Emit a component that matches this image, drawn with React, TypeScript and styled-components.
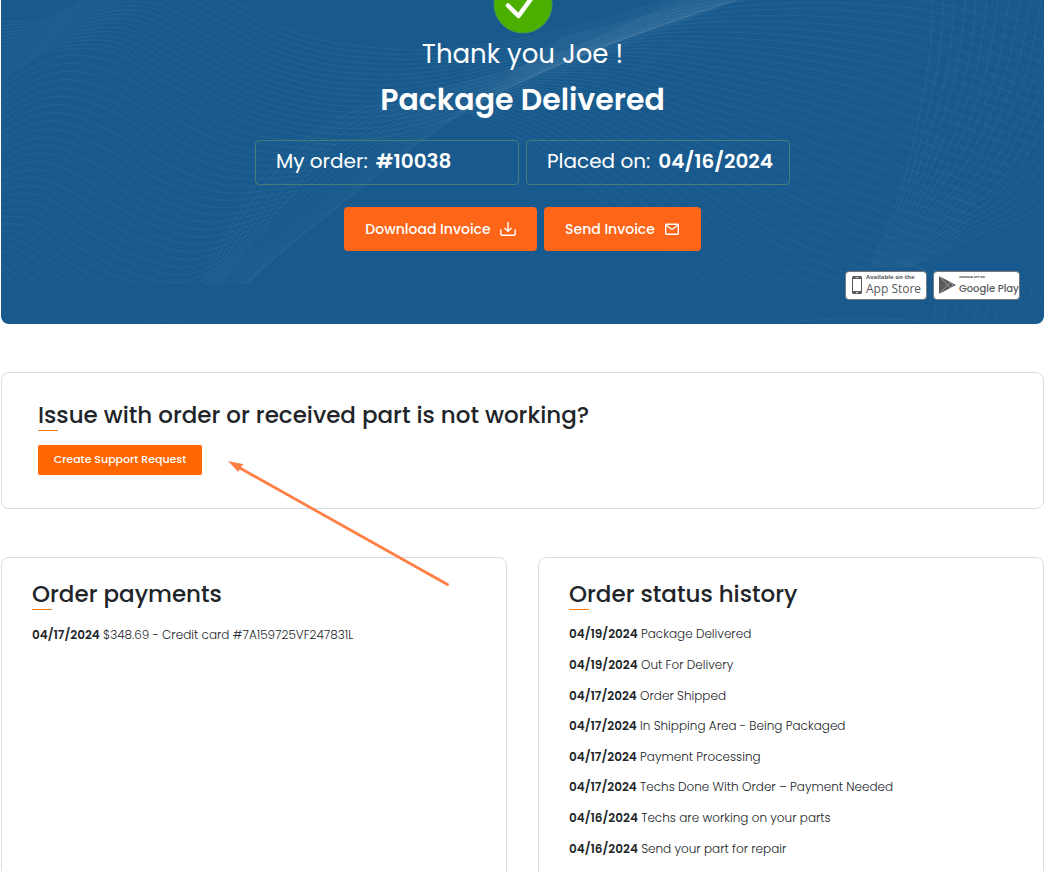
import React from "react";
import styled, { createGlobalStyle } from "styled-components";

const GlobalStyle = createGlobalStyle`
  *, *::before, *::after { box-sizing: border-box; }
  body {
    margin: 0;
    background: #fff;
    color: #212529;
    font-family: Poppins, Inter, "Liberation Sans", sans-serif;
    font-size: 12px;
  }
  h1, h2, p, ul, dl, dd { margin: 0; padding: 0; }
`;

const Page = styled.main`
  display: flex;
  flex-direction: column;
  gap: 48px;
  padding: 0 6px 48px 1px;
`;

/* ---------- hero ---------- */

const Hero = styled.header`
  position: relative;
  display: flex;
  flex-direction: column;
  align-items: center;
  padding-bottom: 24px;
  border-radius: 0 0 8px 8px;
  background: #185a8d;
  color: #fff;
  overflow: hidden;
`;

const Waves = styled.svg`
  position: absolute;
  inset: 0;
  width: 100%;
  height: 100%;
  fill: none;
  stroke: #fff;
`;

const HeroBody = styled.div`
  position: relative;
  display: flex;
  flex-direction: column;
  align-items: center;
  width: 100%;
`;

const StatusMark = styled.svg`
  display: block;
  width: 60px;
  height: 34px;
`;

const Thanks = styled.p`
  font-size: 26px;
  line-height: 40px;
`;

const Status = styled.h1`
  margin-top: 2px;
  font-size: 30px;
  font-weight: 600;
  line-height: 48px;
`;

const Facts = styled.dl`
  display: flex;
  gap: 7px;
  margin-top: 16px;
`;

const Fact = styled.div`
  display: flex;
  gap: 8px;
  width: 264px;
  height: 45px;
  padding: 0 20px;
  border: 1px solid #467d76;
  border-radius: 4px;
  font-size: 20px;
  line-height: 41px;
  white-space: nowrap;

  dd { font-weight: 600; }
`;

const Actions = styled.div`
  display: flex;
  gap: 7px;
  margin-top: 22px;
`;

const HeroButton = styled.button<{ $width: number }>`
  display: flex;
  align-items: center;
  justify-content: center;
  gap: 9px;
  width: ${(p) => p.$width}px;
  height: 44px;
  padding: 0;
  border: 0;
  border-radius: 4px;
  background: #fd6518;
  color: #fff;
  font: inherit;
  font-size: 14px;
  font-weight: 500;
  white-space: nowrap;
  cursor: pointer;
`;

const ButtonIcon = styled.svg`
  width: 16px;
  height: 16px;
  fill: none;
  stroke: currentColor;
`;

const Stores = styled.nav`
  display: flex;
  gap: 6px;
  align-self: flex-end;
  margin: 20px 24px 0 0;
`;

const StoreBadge = styled.a<{ $width: number }>`
  display: flex;
  align-items: center;
  gap: 3px;
  width: ${(p) => p.$width}px;
  height: 29px;
  padding: 0 0 2px 5px;
  border: 1px solid #77797c;
  border-radius: 4px;
  background: #fff;
  color: #58595b;
  text-decoration: none;
  white-space: nowrap;

  svg { flex: none; }
`;

const StoreText = styled.span<{ $face: string }>`
  display: flex;
  flex-direction: column;
  font-family: ${(p) => p.$face}, sans-serif;
`;

const StoreHint = styled.small<{ $size: number }>`
  font-size: ${(p) => p.$size}px;
  font-weight: 700;
  line-height: 8px;
`;

const StoreName = styled.span<{ $size: number }>`
  font-size: ${(p) => p.$size}px;
  font-weight: 500;
  line-height: 16px;
`;

/* ---------- cards ---------- */

const Card = styled.section`
  position: relative;
  border: 1px solid #d2dfe9;
  border-radius: 8px;
  padding: 21px 30px 30px;
`;

const SupportCard = styled(Card)`
  padding: 27px 36px 33px;
`;

const CardTitle = styled.h2`
  font-size: 23px;
  font-weight: 500;
  line-height: 30px;

  &::after {
    content: "";
    display: block;
    width: 20px;
    height: 1px;
    background: #fd7e14;
  }
`;

const SupportButton = styled.button`
  display: block;
  width: 164px;
  height: 30px;
  margin-top: 14px;
  padding: 0 0 2px;
  border: 0;
  border-radius: 2px;
  background: #ff6600;
  color: #fff;
  font: inherit;
  font-size: 11px;
  font-weight: 500;
  line-height: 28px;
  white-space: nowrap;
  cursor: pointer;
`;

const Arrow = styled.svg`
  position: absolute;
  z-index: 1;
  top: 86px;
  left: 225px;
  width: 224px;
  height: 128px;
  pointer-events: none;
`;

const Columns = styled.div`
  display: grid;
  grid-template-columns: 1fr 1fr;
  gap: 31px;
`;

const Entries = styled.ul<{ $height: number }>`
  display: grid;
  grid-auto-rows: 1fr;
  align-items: center;
  height: ${(p) => p.$height}px;
  margin-top: 9px;
  list-style: none;
  font-weight: 300;
  white-space: nowrap;

  strong { font-weight: 600; }
`;

/* ---------- wave drawing ---------- */

type Pt = [number, number];

const smooth = (pts: Pt[]) => {
  let d = `M${pts[0][0]} ${pts[0][1]}`;
  for (let i = 0; i < pts.length - 1; i++) {
    const a = pts[Math.max(i - 1, 0)];
    const b = pts[i];
    const c = pts[i + 1];
    const e = pts[Math.min(i + 2, pts.length - 1)];
    d += `C${(b[0] + (c[0] - a[0]) / 6).toFixed(1)} ${(b[1] + (c[1] - a[1]) / 6).toFixed(1)} ${(c[0] - (e[0] - b[0]) / 6).toFixed(1)} ${(c[1] - (e[1] - b[1]) / 6).toFixed(1)} ${c[0].toFixed(1)} ${c[1].toFixed(1)}`;
  }
  return d;
};

/* Lines blended from one curve to another; ease > 1 packs them towards the second. */
const family = (from: Pt[], to: Pt[], count: number, ease = 1) =>
  Array.from({ length: count }, (_, i) => {
    const t = 1 - Math.pow(1 - i / (count - 1), ease);
    return smooth(
      from.map((p, k) => [p[0] + (to[k][0] - p[0]) * t, p[1] + (to[k][1] - p[1]) * t] as Pt)
    );
  });

const waveLines = [
  ...family(
    [[-2, 22], [50, 17], [105, -12], [170, -25], [230, 0], [285, 29], [350, 45], [440, 49], [560, 30], [700, -12], [830, -60]],
    [[-2, 84], [30, 60], [60, 50], [110, 52], [170, 85], [250, 124], [350, 140], [440, 122], [560, 75], [700, 14], [860, -40]],
    18
  ),
  ...family(
    [[-2, 88], [40, 63], [80, 55], [130, 70], [190, 108], [250, 134], [335, 145]],
    [[-2, 270], [8, 278], [20, 290], [60, 320], [110, 340], [160, 340], [215, 288]],
    29
  ),
  ...family(
    [[197, 286], [230, 225], [270, 168], [340, 117], [430, 92], [560, 52], [700, -10], [800, -60]],
    [[243, 286], [280, 253], [350, 196], [400, 156], [470, 108], [570, 60], [700, 12], [860, -40]],
    20,
    1.6
  ),
  ...family(
    [[560, 38], [680, 8], [780, -8], [880, -10], [970, 2], [1110, 60]],
    [[460, 110], [530, 145], [610, 208], [680, 262], [750, 310], [860, 350]],
    38
  ),
  ...family(
    [[932, -5], [928, 60], [917, 120], [900, 190], [869, 268]],
    [[1140, -5], [1110, 90], [1044, 200], [970, 238], [908, 267]],
    20
  ),
];

const footLines = [
  ...family([[937, 284], [935, 305], [932, 326]], [[1042, 284], [1039, 305], [1032, 326]], 11),
  "M135 324Q165 317 195 324",
  "M780 322Q870 315 950 323",
];

/* ---------- data ---------- */

type Entry = [date: string, text: string];

const payments: Entry[] = [["04/17/2024", "$348.69 - Credit card #7A159725VF247831L"]];

const history: Entry[] = [
  ["04/19/2024", "Package Delivered"],
  ["04/19/2024", "Out For Delivery"],
  ["04/17/2024", "Order Shipped"],
  ["04/17/2024", "In Shipping Area - Being Packaged"],
  ["04/17/2024", "Payment Processing"],
  ["04/17/2024", "Techs Done With Order – Payment Needed"],
  ["04/16/2024", "Techs are working on your parts"],
  ["04/16/2024", "Send your part for repair"],
];

const EntryList = ({ entries, height }: { entries: Entry[]; height: number }) => (
  <Entries $height={height}>
    {entries.map(([date, text]) => (
      <li key={text}>
        <strong>{date}</strong> {text}
      </li>
    ))}
  </Entries>
);

export default function App() {
  return (
    <>
      <GlobalStyle />
      <Page>
        <Hero>
          <Waves viewBox="0 0 1043 324" preserveAspectRatio="xMidYMin slice" aria-hidden="true">
            <defs>
              <clipPath id="wave-tile">
                <rect width="1043" height="284" />
              </clipPath>
            </defs>
            <g clipPath="url(#wave-tile)" strokeOpacity="0.05">
              {waveLines.map((d, i) => (
                <path key={i} d={d} />
              ))}
            </g>
            <g strokeOpacity="0.04">
              {footLines.map((d, i) => (
                <path key={i} d={d} />
              ))}
            </g>
          </Waves>
          <HeroBody>
            <StatusMark viewBox="0 0 60 34" aria-hidden="true">
              <circle cx="30" cy="4" r="29" fill="#4caf00" stroke="#43a047" />
              <path
                d="M15 5.500L25.500 16L40 -4"
                fill="none"
                stroke="#fff"
                strokeWidth="4.500"
                strokeLinecap="round"
                strokeLinejoin="round"
              />
            </StatusMark>
            <Thanks>Thank you Joe !</Thanks>
            <Status>Package Delivered</Status>
            <Facts>
              <Fact>
                <dt>My order:</dt>
                <dd>#10038</dd>
              </Fact>
              <Fact>
                <dt>Placed on:</dt>
                <dd>04/16/2024</dd>
              </Fact>
            </Facts>
            <Actions>
              <HeroButton type="button" $width={193}>
                Download Invoice
                <ButtonIcon viewBox="0 0 16 16" strokeWidth="1.400" aria-hidden="true">
                  <path d="M8 1v9M4.500 7L8 10.300L11.500 7M.8 8.500v4.300q0 1.500 1.500 1.500h11.400q1.500 0 1.500-1.500V8.500" />
                </ButtonIcon>
              </HeroButton>
              <HeroButton type="button" $width={157}>
                Send Invoice
                <ButtonIcon viewBox="0 0 16 16" strokeWidth="1.400" aria-hidden="true">
                  <rect x="1.700" y="3.200" width="12.600" height="10" rx=".6" />
                  <path d="M1.800 4L8 8.500L14.200 4" />
                </ButtonIcon>
              </HeroButton>
            </Actions>
            <Stores aria-label="Mobile apps">
              <StoreBadge href="#app-store" $width={82}>
                <svg width="12" height="20" viewBox="0 0 12 20" aria-hidden="true">
                  <rect x="1" y="1" width="10" height="18" rx="1.500" fill="#58595b" />
                  <rect x="2" y="4" width="8" height="12" fill="#fff" />
                  <path d="M4.500 2.500h3" stroke="#fff" strokeWidth=".7" />
                  <circle cx="6" cy="17.500" r=".8" fill="#fff" />
                </svg>
                <StoreText $face='"Open Sans"'>
                  <StoreHint $size={6}>Available on the</StoreHint>
                  <StoreName $size={12}>App Store</StoreName>
                </StoreText>
              </StoreBadge>
              <StoreBadge href="#google-play" $width={87}>
                <svg width="17" height="20" viewBox="0 0 17 20" aria-hidden="true">
                  <path d="M0 1L17 10L0 19Z" fill="#58595b" />
                  <path d="M0 1L11.500 13M0 19L11.500 7M11.500 7L14 10L11.500 13" fill="none" stroke="#bbb" strokeWidth=".7" />
                </svg>
                <StoreText $face="Poppins">
                  <StoreHint $size={3}>ANDROID APP ON</StoreHint>
                  <StoreName $size={10}>Google Play</StoreName>
                </StoreText>
              </StoreBadge>
            </Stores>
          </HeroBody>
        </Hero>

        <SupportCard>
          <CardTitle>Issue with order or received part is not working?</CardTitle>
          <SupportButton type="button">Create Support Request</SupportButton>
          <Arrow viewBox="0 0 224 128" aria-hidden="true">
            <path d="M12 8.500L220.500 125.500" stroke="#ff7f45" strokeWidth="2.800" strokeLinecap="round" />
            <path d="M1 2L16.500 5.200L13.500 8.500L11.300 13Z" fill="#ff7f45" />
          </Arrow>
        </SupportCard>

        <Columns>
          <Card>
            <CardTitle>Order payments</CardTitle>
            <EntryList entries={payments} height={31} />
          </Card>
          <Card>
            <CardTitle>Order status history</CardTitle>
            <EntryList entries={history} height={245} />
          </Card>
        </Columns>
      </Page>
    </>
  );
}
